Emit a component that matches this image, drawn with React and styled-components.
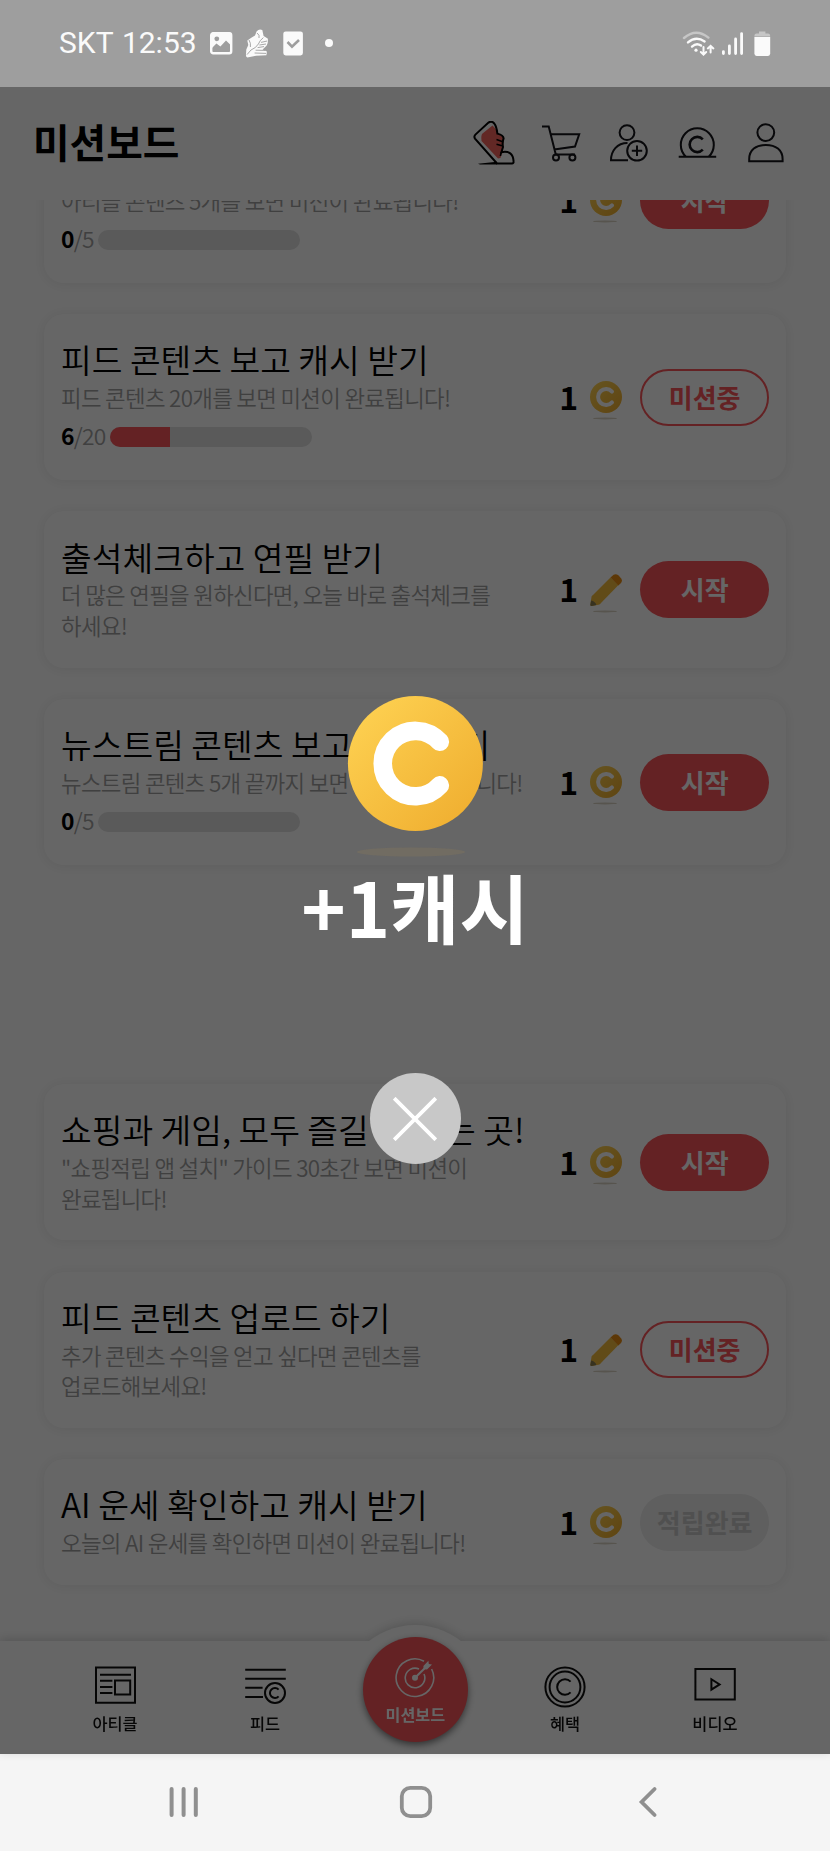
import React from 'react'
import styled, { createGlobalStyle, css } from 'styled-components'

const GlobalStyle = createGlobalStyle`
    * {
        box-sizing: border-box;
    }
    body {
        margin: 0;
        background: #ffffff;
        font-family: 'Noto Sans CJK KR', sans-serif;
    }
`;

const Screen = styled.div`
    display: flex;
    flex-direction: column;
    width: 830px;
    height: 1851px;
    overflow: hidden;
`;

const StatusBar = styled.div`
    display: flex;
    justify-content: space-between;
    flex: none;
    height: 87px;
    padding: 28px 58px 0 59px;
    background: #9e9e9e;
`;

const StatusGroup = styled.div`
    display: flex;
    height: 30px;
    align-items: center;
`;

const Clock = styled.div`
    font-family: Roboto, sans-serif;
    font-size: 30px;
    line-height: 30px;
    word-spacing: 1.5px;
    color: #fafafa;
    width: 149px;
    white-space: nowrap;
`;

const AppArea = styled.div`
    position: relative;
    display: flex;
    flex-direction: column;
    flex: 1;
    min-height: 0;
    background: #ffffff;
`;

const Header = styled.div`
    display: flex;
    align-items: center;
    justify-content: space-between;
    flex: none;
    height: 113px;
    padding: 0 42px 0 33px;
`;

const PageTitle = styled.div`
    padding-bottom: 5px;
    font-weight: bold;
    font-size: 39.8px;
    line-height: 50px;
    color: #000000;
`;

const HeaderIcons = styled.div`
    display: flex;
    gap: 24px;
    padding-bottom: 1px;
`;

/* the list is scrolled to its end, so the first card runs under the header */
const MissionList = styled.div`
    display: flex;
    flex-direction: column;
    justify-content: flex-end;
    gap: 31.4px;
    flex: 1;
    min-height: 0;
    overflow: hidden;
    padding: 0 44px 56px;
`;

const AdSlot = styled.div`
    flex: none;
    height: 156.5px;
`;

const Card = styled.div`
    display: flex;
    flex: none;
    align-items: center;
    justify-content: space-between;
    padding: 22.2px 16.7px 27px 17px;
    border-radius: 20px;
    background: #ffffff;
    box-shadow: 0 1px 13px rgba(0, 0, 0, 0.08);
`;

const CardText = styled.div`
    width: 490px;
    font-family: 'Noto Sans CJK KR DemiLight', 'Noto Sans CJK KR', sans-serif;
`;

const CardTitle = styled.div`
    min-height: 45.8px;
    font-size: 33.4px;
    line-height: 45.8px;
    color: #000000;
    white-space: nowrap;
`;

const CardSub = styled.div`
    font-weight: 350;
    font-size: 22.4px;
    line-height: 30.6px;
    letter-spacing: -0.7px;
    color: #a0a0a0;
    white-space: pre;
`;

const ProgressRow = styled.div`
    display: flex;
    align-items: center;
    height: 40.2px;
    padding-top: 8px;
`;

const Count = styled.div`
    font-weight: 350;
    font-size: 22.8px;
    line-height: 28px;
    letter-spacing: -0.7px;
    color: #a0a0a0;
    margin-right: 4px;
    padding-bottom: 1px;
    b {
        font-family: 'Noto Sans CJK KR', sans-serif;
        font-weight: bold;
        color: #000000;
    }
`;

const Track = styled.div`
    width: 202px;
    height: 20px;
    border-radius: 10px;
    background: #e1e1e1;
    overflow: hidden;
`;

const Fill = styled.div`
    height: 100%;
    background: #fa555a;
`;

const CardAction = styled.div`
    display: flex;
    align-items: center;
    margin-top: 5.2px;
`;

const Amount = styled.div`
    padding-bottom: 3px;
    font-weight: bold;
    font-size: 32px;
    line-height: 40px;
    color: #000000;
`;

const RewardIcon = styled.svg`
    width: 32px;
    height: 44px;
    margin: 6px 18px 0 12px;
`;

const buttonKinds = {
    start: css`
        background: #fa555a;
        color: #ffffff;
    `,
    doing: css`
        border: 2px solid #fa555a;
        color: #fa555a;
    `,
    done: css`
        background: #ededed;
        color: #c8c8c8;
    `,
};

const MissionButton = styled.div`
    display: flex;
    align-items: center;
    justify-content: center;
    width: 129.3px;
    height: 57px;
    padding-bottom: 2px;
    border-radius: 28.5px;
    font-weight: bold;
    font-size: 26px;
    ${props => buttonKinds[props.$kind]}
`;

/* drop-shadow follows the outline of the bar together with its bump */
const TabBar = styled.div`
    position: relative;
    display: flex;
    flex: none;
    height: 113.3px;
    padding: 0 40px;
    background: #ffffff;
    filter: drop-shadow(0 -2px 5px rgba(0, 0, 0, 0.16));
    &::before {
        content: '';
        position: absolute;
        left: 341px;
        top: -15.7px;
        width: 148px;
        height: 148px;
        border-radius: 50%;
        background: #ffffff;
        clip-path: inset(0 0 40px 0);
    }
`;

const Tab = styled.div`
    position: relative;
    display: flex;
    flex-direction: column;
    align-items: center;
    flex: 1;
    padding-top: 25px;
    font-weight: 500;
    font-size: 16.4px;
    line-height: 20px;
    color: #111111;
    svg {
        margin-bottom: 5px;
    }
`;

const ActiveTab = styled.div`
    position: relative;
    display: flex;
    flex-direction: column;
    align-items: center;
    width: 105.4px;
    height: 105.4px;
    margin: -4px 22px 0 22.6px;
    padding-top: 20px;
    border-radius: 50%;
    background: #fa555a;
    box-shadow: 0 3px 7px rgba(0, 0, 0, 0.5);
    font-weight: bold;
    font-size: 16.2px;
    line-height: 20px;
    color: #ffffff;
    svg {
        margin-bottom: 5px;
    }
`;

const Dim = styled.div`
    position: absolute;
    inset: 0;
    display: flex;
    flex-direction: column;
    align-items: center;
    padding-top: 609px;
    background: rgba(0, 0, 0, 0.6);
`;

const RewardText = styled.div`
    margin-top: -4px;
    font-weight: bold;
    font-size: 75.4px;
    line-height: 96px;
    color: #ffffff;
    white-space: nowrap;
`;

const CloseButton = styled.div`
    display: flex;
    align-items: center;
    justify-content: center;
    width: 91px;
    height: 91px;
    margin-top: 119px;
    border-radius: 50%;
    background: #c8c8c8;
`;

const SystemNav = styled.div`
    display: flex;
    flex: none;
    height: 97px;
    padding: 0 66px 1px 68px;
    background: #f5f5f5;
`;

const SystemKey = styled.div`
    display: flex;
    align-items: center;
    justify-content: center;
    width: 232px;
`;

const Line = ({ width = 44, height = 44, stroke = 2, color = '#14141a', children }) => (
    <svg width={width} height={height} viewBox={`0 0 ${width} ${height}`} fill="none" stroke={color} strokeWidth={stroke}>
        {children}
    </svg>
)

const ShoeIcon = () => (
    <Line>
        <path d="M20.5 4.5L10.5 12.5Q8.8 14 9.5 20L26 37.6L28.4 37L31 29.5L31.7 17Q30.5 14 26 13.5Q25.5 9 20.5 4.5Z" fill="#f4645c" stroke="none" />
        <path d="M16.5 1.6Q19.5 -.4 22 2.2Q24.6 5.5 25.4 12.6Q31.4 14 31.6 17.4Q30 22 31 26L29.4 31.2Q41 29 41.6 40.4Q41.8 42.4 40 42.4H25L3 17.6Q1.6 15.6 3.4 13.6Z" stroke="#000" />
        <path d="M24.5 18.6L30 20.4M24.5 23.2L30 24.8M29.4 31.2Q28.6 33 28.4 35" stroke="#000" strokeWidth="1.6" />
        <path d="M6 42.8L25 40.8V43.4H8Z" fill="#000" stroke="none" />
    </Line>
)

const CartIcon = () => (
    <Line>
        <path d="M2 5.5H8.7L15.8 33.5H35M10.4 13.2H39.2L35 25.6L14.2 28.4" />
        <circle cx="16" cy="36.4" r="3" />
        <circle cx="32.4" cy="36.4" r="3" />
    </Line>
)

const AddUserIcon = () => (
    <Line>
        <circle cx="19" cy="11.6" r="7.4" />
        <path d="M19.5 22C9 22 3 30 3 39.2H20" />
        <circle cx="29" cy="29.8" r="9.8" />
        <path d="M29 24.6V35M23.8 29.8H34.2" />
    </Line>
)

const CoinMachineIcon = () => (
    <Line>
        <path d="M10 35.8A16.5 16.5 0 1 1 32.6 35.8M2.7 35.8H40.2" />
        <path d="M26.8 18.3A7.6 7.6 0 1 0 26.8 28.7" strokeWidth="2.6" />
    </Line>
)

const UserIcon = () => (
    <Line>
        <circle cx="21.8" cy="11.6" r="8.4" />
        <path d="M5.2 40.2V38C5.2 29 12 23.9 21.9 23.9S38.6 29 38.6 38V40.2Z" />
    </Line>
)

const Coin = () => (
    <RewardIcon viewBox="0 0 32 44">
        <defs>
            <linearGradient id="coin" x1="0" y1="0" x2="1" y2="1">
                <stop offset="0" stopColor="#ffd454" />
                <stop offset="1" stopColor="#eeab2d" />
            </linearGradient>
        </defs>
        <circle cx="16" cy="19" r="16" fill="url(#coin)" />
        <path d="M22 13.6A8 8 0 1 0 22 24.4" fill="none" stroke="#fff" strokeWidth="4" strokeLinecap="round" />
        <ellipse cx="15" cy="40.4" rx="12" ry="1" fill="#d9d3c3" />
    </RewardIcon>
)

const Pencil = () => (
    <RewardIcon viewBox="0 0 32 44">
        <path d="M2 25L20.5 6.5L28.5 14L10 33L2 34Z" fill="#f3bb3c" />
        <path d="M20.5 6.5L23.6 3.8Q26 2.4 28.6 4.6L31 7.2Q32.8 9.6 31 12L28.4 14.5Z" fill="#e88d13" />
        <path d="M1.6 25.6L.3 33.6Q.3 35.2 2 35L9.4 33.4L10.4 32.4L2.6 24.6Z" fill="#f3bb3c" />
        <path d="M1.2 29.6L.3 34Q.3 35.2 1.6 35L6.4 34Q5 30.4 1.2 29.6Z" fill="#8a7d52" />
        <ellipse cx="15" cy="40.4" rx="12" ry="1" fill="#d9d3c3" />
    </RewardIcon>
)

const BigCoin = () => (
    <svg width="136" height="166" viewBox="0 0 136 166">
        <circle cx="68.4" cy="67.5" r="67.5" fill="url(#coin)" />
        <path d="M92.8 45.8A32.7 32.7 0 1 0 92.8 89.4" fill="none" stroke="#fff" strokeWidth="18.6" strokeLinecap="round" />
        <ellipse cx="64" cy="156" rx="54" ry="4.5" fill="#f0b030" fillOpacity="0.08" />
    </svg>
)

const labels = { start: '시작', doing: '미션중', done: '적립완료' }

const Mission = ({ title, sub, done, total, reward, kind }) => (
    <Card>
        <CardText>
            <CardTitle>{title}</CardTitle>
            <CardSub>{sub}</CardSub>
            {total && (
                <ProgressRow>
                    <Count><b>{done}</b>/{total}</Count>
                    <Track>
                        <Fill style={{ width: `${done / total * 100}%` }} />
                    </Track>
                </ProgressRow>
            )}
        </CardText>
        <CardAction>
            <Amount>1</Amount>
            {reward === 'pencil' ? <Pencil /> : <Coin />}
            <MissionButton $kind={kind}>{labels[kind]}</MissionButton>
        </CardAction>
    </Card>
)

const missions = [
    { sub: '아티클 콘텐츠 5개를 보면 미션이 완료됩니다!', done: 0, total: 5, kind: 'start' },
    { title: '피드 콘텐츠 보고 캐시 받기', sub: '피드 콘텐츠 20개를 보면 미션이 완료됩니다!', done: 6, total: 20, kind: 'doing' },
    { title: '출석체크하고 연필 받기', sub: '더 많은 연필을 원하신다면, 오늘 바로 출석체크를\n하세요!', reward: 'pencil', kind: 'start' },
    { title: '뉴스트림 콘텐츠 보고 캐시 받기', sub: '뉴스트림 콘텐츠 5개 끝까지 보면 미션이 완료됩니다!', done: 0, total: 5, kind: 'start' },
    { ad: true },
    { title: '쇼핑과 게임, 모두 즐길 수 있는 곳!', sub: '"쇼핑적립 앱 설치" 가이드 30초간 보면 미션이\n완료됩니다!', kind: 'start' },
    { title: '피드 콘텐츠 업로드 하기', sub: '추가 콘텐츠 수익을 얻고 싶다면 콘텐츠를\n업로드해보세요!', reward: 'pencil', kind: 'doing' },
    { title: 'AI 운세 확인하고 캐시 받기', sub: '오늘의 AI 운세를 확인하면 미션이 완료됩니다!', kind: 'done' },
]

const App = () => (
    <>
        <GlobalStyle />
        <Screen>
            <StatusBar>
                <StatusGroup>
                    <Clock>SKT 12:53</Clock>
                    <svg width="126" height="30" viewBox="0 0 126 30">
                        <rect x="3.2" y="5.2" width="20" height="20" rx="2" fill="none" stroke="#fafafa" strokeWidth="2.4" />
                        <path fill="#fafafa" d="M4 4.5H22.6V17L18 12.6L12.4 18.6L8.4 15.6L4 20Z" />
                        <circle cx="8.8" cy="10.8" r="2.4" fill="#9e9e9e" />
                        <path fill="#fafafa" d="M48.7 3.2Q51 .6 54.3 2L55.6 8L59.7 10.5Q60.6 14 58.7 17.4L54.6 21.4L58.9 23.6L58.4 27.2L48 27.8L39.4 29.4Q37.6 29.4 38 26L38.3 21.4L40.3 17L39.3 12.4L43.7 9.5L47 7.4Z" />
                        <path stroke="#9e9e9e" strokeWidth="0.9" fill="none" d="M41 12Q43 15 42.4 19M49 5Q52 7 51 10M55.4 9.6Q52 12 50.4 16Q48 20 43 22L39 26.6M53 14.4L59.2 13M51.4 17L58 16M49.6 19.6L56 18.6M47.6 22.2L57 22.4M46.6 25L58 25.4" />
                        <rect x="75.3" y="3.4" width="19.6" height="24" rx="2.4" fill="#fafafa" />
                        <path d="M79.5 14L84 18.6L91 12" fill="none" stroke="#9e9e9e" strokeWidth="2.6" />
                        <circle cx="121" cy="15" r="4" fill="#fafafa" />
                    </svg>
                </StatusGroup>
                <StatusGroup>
                    <svg width="90" height="30" viewBox="0 0 90 30" fill="none" stroke="#fafafa" strokeWidth="2.4" strokeLinecap="round">
                        <path d="M2 10Q14 -.4 26.4 9.6" stroke="#c6c6c6" />
                        <path d="M6 14.4Q14 7.6 22.6 13.4M10 18.6Q14.4 14.6 19 17.6" />
                        <circle cx="14" cy="22.2" r="1.6" fill="#fafafa" stroke="none" />
                        <path d="M21.5 19V26M18.8 24L21.5 26.6L24.2 24M28.6 24.4V18.4M25.8 20.4L28.6 17.8L31.4 20.4" strokeWidth="2" />
                        <path d="M41.4 23.6V25.6M47.4 18V25.6M53.6 11V25.6M59.6 5.6V25.6" strokeWidth="2.8" />
                        <path d="M77 3.4H83.4V5.6H86Q88.2 5.6 88.2 8.4H72.4Q72.4 5.6 74.6 5.6H77Z" fill="#c6c6c6" stroke="none" />
                        <path d="M72.4 9H88.2V25.6Q88.2 28 86 28H74.6Q72.4 28 72.4 25.6Z" fill="#fafafa" stroke="none" />
                    </svg>
                </StatusGroup>
            </StatusBar>
            <AppArea>
                <Header>
                    <PageTitle>미션보드</PageTitle>
                    <HeaderIcons>
                        <ShoeIcon />
                        <CartIcon />
                        <AddUserIcon />
                        <CoinMachineIcon />
                        <UserIcon />
                    </HeaderIcons>
                </Header>
                <MissionList>
                    {missions.map((mission, i) => mission.ad ? <AdSlot key={i} /> : <Mission key={i} {...mission} />)}
                </MissionList>
                <TabBar>
                    <Tab>
                        <Line width={42} height={42} color="#111">
                            <path d="M2 1.6H41V36.8H2ZM6 8.8H37M6 14.8H18.4M6 21H18.4M6 27H18.4M21 14.4H36.2V28.4H21Z" />
                        </Line>
                        아티클
                    </Tab>
                    <Tab>
                        <Line width={42} height={42} color="#111">
                            <path d="M1.2 3.8H41.8M1.2 12.8H41.8M1.2 21.8H18.6M1.2 31H19" />
                            <circle cx="31" cy="27" r="10" />
                            <path d="M34.6 23.6A5 5 0 1 0 34.6 30.4" />
                        </Line>
                        피드
                    </Tab>
                    <ActiveTab>
                        <Line width={42} height={42} color="#fff" stroke={1.6}>
                            <path d="M30 4.2A18.8 18.8 0 1 0 37.6 12M25 12A9.8 9.8 0 1 0 30 17" />
                            <circle cx="21" cy="20.8" r="3" fill="#fff" stroke="none" />
                            <path d="M21 20.8L31 11" strokeWidth="2" />
                            <path d="M29.4 9L34.4 3.8L34.8 7L38 7.4L33 12.6L29.6 12.2Z" fill="#fff" stroke="none" />
                        </Line>
                        미션보드
                    </ActiveTab>
                    <Tab>
                        <Line width={42} height={42} color="#111">
                            <circle cx="21" cy="21" r="19.6" />
                            <circle cx="21" cy="21" r="15.4" />
                            <path d="M26.6 15.6A7.8 7.8 0 1 0 26.6 26.4" />
                        </Line>
                        혜택
                    </Tab>
                    <Tab>
                        <Line width={42} height={42} color="#111">
                            <path d="M1.4 3H40.8V33.6H1.4ZM17.4 13.2V23.6L25.6 18.4Z" />
                        </Line>
                        비디오
                    </Tab>
                </TabBar>
                <Dim>
                    <BigCoin />
                    <RewardText>+1캐시</RewardText>
                    <CloseButton>
                        <Line width={44} height={44} color="#fff" stroke={3.8}>
                            <path d="M1.2 1.2L42.8 42.8M42.8 1.2L1.2 42.8" />
                        </Line>
                    </CloseButton>
                </Dim>
            </AppArea>
            <SystemNav>
                <SystemKey>
                    <Line width={32} height={34} color="#8f8f8f" stroke={4}>
                        <path d="M3.6 4V30M15.6 4V30M27.8 4V30" strokeLinecap="round" />
                    </Line>
                </SystemKey>
                <SystemKey>
                    <Line width={34} height={34} color="#8f8f8f" stroke={3.8}>
                        <rect x="2.8" y="2.8" width="28.4" height="28.4" rx="8.5" />
                    </Line>
                </SystemKey>
                <SystemKey>
                    <Line width={24} height={34} color="#8f8f8f" stroke={3.8}>
                        <path d="M18.6 4L5.6 17L18.6 30" strokeLinecap="round" />
                    </Line>
                </SystemKey>
            </SystemNav>
        </Screen>
    </>
)

export default App
